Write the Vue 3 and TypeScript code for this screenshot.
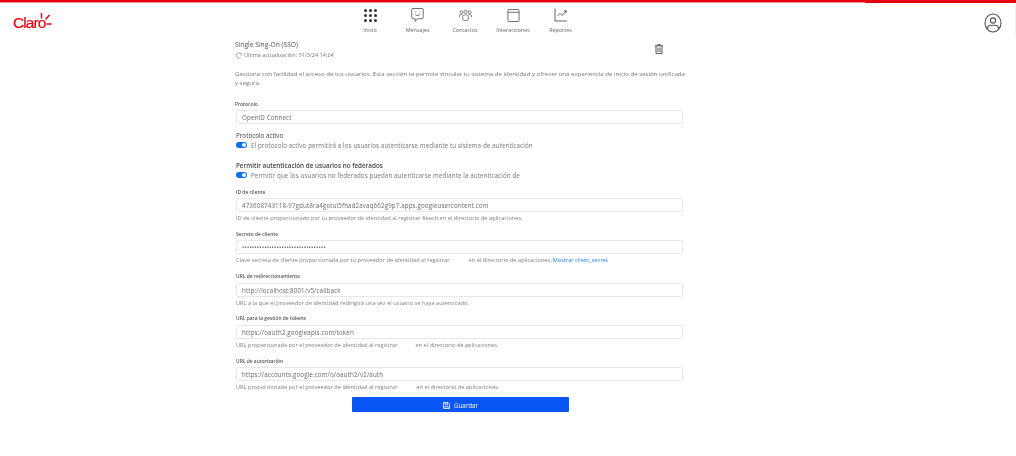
<script setup lang="ts">
interface Field {
	label: string;
	value: string;
	help: string;
	gap?: string;
	after?: string;
	link?: string;
}

const fields: Field[] = [
	{
		label: "ID de cliente",
		value: "473608743118-97gdut8ra4gotui5fhad2avaq662g9p7.apps.googleusercontent.com",
		help: "ID de cliente proporcionado por tu proveedor de identidad al registrar Reach en el directorio de aplicaciones.",
	},
	{
		label: "Secreto de cliente",
		value: "••••••••••••••••••••••••••••••••••",
		help: "Clave secreta de cliente proporcionada por tu proveedor de identidad al registrar",
		gap: "15px",
		after: "en el directorio de aplicaciones.",
		link: "Mostrar client_secret",
	},
	{
		label: "URL de redireccionamiento",
		value: "http://localhost:8001/v5/callback",
		help: "URL a la que el proveedor de identidad redirigirá una vez el usuario se haya autenticado.",
	},
	{
		label: "URL para la gestión de tokens",
		value: "https://oauth2.googleapis.com/token",
		help: "URL proporcionada por el proveedor de identidad al registrar",
		gap: "14px",
		after: "en el directorio de aplicaciones.",
	},
	{
		label: "URL de autorización",
		value: "https://accounts.google.com/o/oauth2/v2/auth",
		help: "URL proporcionada por el proveedor de identidad al registrar",
		gap: "15px",
		after: "en el directorio de aplicaciones.",
	},
];

const dots = [0, 1, 2, 3, 4, 5, 6, 7, 8];
</script>

<template>
	<div class="page">
		<div class="top_bar"><span class="top_bar_end"></span></div>

		<header>
			<div class="logo">
				<span>Claro</span>
				<svg width="14" height="16" viewBox="0 0 14 16">
					<path d="M2.500 0v5.500M6.500 6.500 10.500 2M7.500 11h5" stroke="#e30613" stroke-width="1.400" fill="none" />
				</svg>
			</div>

			<nav>
				<div class="nav_item inicio">
					<div class="nav_icon">
						<div class="dots"><i v-for="dot in dots" :key="dot"></i></div>
					</div>
					<span>Inicio</span>
				</div>
				<div class="nav_item mensajes">
					<div class="nav_icon">
						<svg width="13" height="16" viewBox="0 0 14 16" fill="none" stroke="#555" stroke-width="0.9">
							<path d="M2 1h10a1.200 1.200 0 0 1 1.200 1.200v8.600A1.200 1.200 0 0 1 12 12H7l-2.500 3v-3H2a1.200 1.200 0 0 1-1.200-1.200V2.200A1.200 1.200 0 0 1 2 1Z" />
							<path d="M4.500 7.500c1.300 1.500 3.700 1.500 5 0M5 4.500v.8M9 4.500v.8" />
						</svg>
					</div>
					<span>Mensajes</span>
				</div>
				<div class="nav_item contactos">
					<div class="nav_icon">
						<svg width="13" height="13" viewBox="0 0 14 14" fill="none" stroke="#555" stroke-width="0.8">
							<circle cx="2.600" cy="3.500" r="1.500" />
							<circle cx="7" cy="3" r="1.700" />
							<circle cx="11.400" cy="3.500" r="1.500" />
							<path d="M.5 9V7.500C.5 6.500 1.500 6 2.600 6c.8 0 1.200.2 1.600.5M13.500 9V7.500c0-1-1-1.500-2.100-1.500-.8 0-1.200.2-1.600.5" />
							<path d="M4 11.500v-3C4 7 5.500 6.200 7 6.200S10 7 10 8.500v3c-1.500 1.300-4.500 1.300-6 0Z" />
						</svg>
					</div>
					<span>Contactos</span>
				</div>
				<div class="nav_item interacciones">
					<div class="nav_icon">
						<svg width="13" height="15" viewBox="0 0 14 15" fill="none" stroke="#555" stroke-width="0.9">
							<rect x="1" y="1" width="12" height="13" rx="1" />
							<path d="M1 4h12" />
						</svg>
					</div>
					<span>Interacciones</span>
				</div>
				<div class="nav_item reportes">
					<div class="nav_icon">
						<svg width="14" height="14" viewBox="0 0 14 14" fill="none" stroke="#555" stroke-width="0.9">
							<path d="M1 .5v12.500h12" />
							<path d="M3.500 8 6 5.500 8 7.500 12 3M10 2.800h2.200V5" />
						</svg>
					</div>
					<span>Reportes</span>
				</div>
			</nav>

			<svg class="user" width="18" height="20" viewBox="0 0 18 20" fill="none" stroke="#555" stroke-width="1.100">
				<ellipse cx="9" cy="10" rx="8" ry="9" />
				<circle cx="9" cy="7.500" r="2.600" />
				<path d="M3.700 16v-1c0-1.700 1.500-2.700 3-2.700h4.600c1.500 0 3 1 3 2.700v1" />
			</svg>
		</header>

		<main>
			<div class="title_row">
				<div>
					<h1>Single Sing-On (SSO)</h1>
					<div class="updated">
						<svg width="8" height="7" viewBox="0 0 8 7" fill="none" stroke="#888" stroke-width="0.7">
							<path d="M5.500 1.200A2.700 2.700 0 1 0 5.500 5.800M5.200 1.500h1.800M5.500 3h1.800" />
						</svg>
						<span>Última actualización: 31/3/24 14:24</span>
					</div>
				</div>
				<svg class="trash" width="8" height="10" viewBox="0 0 8 10" fill="none" stroke="#444" stroke-width="0.9">
					<path d="M0 1.800h8M2.700 1.700V.6h2.600v1.100M1 2v7.400h6V2M3 3.500v4.500M5 3.500v4.500" />
				</svg>
			</div>

			<p class="description">
				Gestiona con facilidad el acceso de tus usuarios. Esta sección te permite vincular tu sistema de identidad y ofrecer una experiencia de inicio de sesión unificada y segura.
			</p>

			<label class="field_label first">Protocolo</label>
			<div class="input">OpenID Connect</div>

			<div class="switch_title active_title">Protocolo activo</div>
			<div class="switch_row">
				<span class="switch"></span>
				<span>El protocolo activo permitirá a los usuarios autenticarse mediante tu sistema de autenticación</span>
			</div>

			<div class="switch_title federated_title">Permitir autenticación de usuarios no federados</div>
			<div class="switch_row">
				<span class="switch"></span>
				<span>Permitir que los usuarios no federados puedan autenticarse mediante la autenticación de</span>
			</div>

			<section class="fields">
				<div v-for="field in fields" :key="field.label" class="field">
					<label class="field_label">{{ field.label }}</label>
					<div class="input">{{ field.value }}</div>
					<div class="help">
						<span>{{ field.help }}</span>
						<span v-if="field.gap" :style="{ width: field.gap }"></span>
						<span v-if="field.after">{{ field.after }}</span>
						<a v-if="field.link">{{ field.link }}</a>
					</div>
				</div>
			</section>

			<button type="button">
				<svg width="7" height="7" viewBox="0 0 7 7" fill="none" stroke="#fff" stroke-width="0.8">
					<path d="M.5.5h4.500l1.500 1.500v4.500h-6ZM2 .7v1.600h2.500V.7M2 6.300V4.200h3v2.100" />
				</svg>
				<span>Guardar</span>
			</button>
		</main>
	</div>
</template>

<style scoped>
.page {
	width: 1016px;
	height: 456px;
	background: #fff;
	overflow: hidden;
	font-family: "Open Sans", sans-serif;
	color: #6f6f6f;
	filter: blur(0.35px);
}

.top_bar {
	height: 2px;
	border-bottom: 1px solid #f28a8f;
	background: #e5000f;
	display: flex;
	justify-content: flex-end;
}

.top_bar_end {
	width: 151px;
	height: 3px;
	background: #e5000f;
}

header {
	height: 33px;
	display: flex;
	padding-left: 13px;
	position: relative;
	border-right: 1px solid #f2f2f2;
}

.logo {
	display: flex;
	width: 351px;
	height: 24px;
	padding-top: 11px;
	font-family: "Liberation Sans", sans-serif;
	font-size: 15.500px;
	letter-spacing: -0.9px;
	line-height: 18px;
	color: #e30613;
	-webkit-text-stroke: 0.2px #e30613;
}

.logo svg {
	margin: -1px 0 0 -7px;
}

nav {
	display: flex;
	font-size: 5.400px;
	color: #666;
}

.nav_item {
	display: flex;
	flex-direction: column;
	align-items: center;
	gap: 3px;
	padding-top: 4px;
}

.nav_icon {
	height: 16px;
	display: flex;
	align-items: center;
}

.inicio { width: 12px; }
.mensajes { width: 24px; margin-left: 29.500px; }
.contactos { width: 26px; margin-left: 22.500px; }
.interacciones { width: 33px; margin-left: 18.500px; }
.reportes { width: 24px; margin-left: 19px; }

.dots {
	display: grid;
	grid-template-columns: repeat(3, 3px);
	gap: 2px;
}

.dots i {
	width: 3px;
	height: 3px;
	border-radius: 50%;
	background: #333;
}

.user {
	position: absolute;
	right: 13px;
	top: 10px;
}

main {
	width: 449px;
	margin-left: 235px;
	margin-top: 3.500px;
}

.title_row {
	display: flex;
	justify-content: space-between;
	padding-right: 21px;
}

.title_row .trash {
	margin-top: 4.500px;
}

h1 {
	margin: 0;
	font-size: 6.700px;
	font-weight: 400;
	line-height: 9px;
	color: #555;
}

.updated {
	display: flex;
	align-items: center;
	gap: 1px;
	margin-top: 2.500px;
	font-size: 5.500px;
	line-height: 8px;
	color: #777;
}

.description {
	margin: 10px -4px 0 0;
	font-size: 6.090px;
	line-height: 9.250px;
	color: #777;
}

.field_label {
	display: block;
	font-size: 4.900px;
	line-height: 8.500px;
	font-weight: 600;
	color: #555;
}

.field_label.first {
	margin-top: 12px;
}

.input {
	height: 14px;
	width: 447px;
	box-sizing: border-box;
	margin: 2px 0 0 1px;
	padding-left: 5px;
	border: 1px solid #e8e8e8;
	border-radius: 2px;
	font-size: 6.200px;
	line-height: 13px;
	letter-spacing: 0.14px;
	color: #6a6a6a;
}

.switch_title {
	margin-left: 1px;
	font-size: 6.300px;
	line-height: 8px;
	color: #444;
}

.active_title {
	margin-top: 7.500px;
}

.federated_title {
	margin-top: 12px;
	font-weight: 600;
}

.switch_row {
	display: flex;
	align-items: center;
	gap: 4px;
	margin: 1px 0 0 1px;
	height: 9px;
	font-size: 6.240px;
	letter-spacing: 0.1px;
	color: #777;
}

.switch {
	width: 11px;
	height: 6px;
	border-radius: 3px;
	background: #0b6fe8;
	position: relative;
}

.switch::after {
	content: "";
	position: absolute;
	right: 1px;
	top: 1px;
	width: 4px;
	height: 4px;
	border-radius: 50%;
	background: #fff;
}

.fields {
	margin-top: 8px;
	display: flex;
	flex-direction: column;
}

.field {
	height: 42.250px;
	margin-left: 1px;
}

.field .input {
	margin-left: 0;
}

.help {
	display: flex;
	gap: 2px;
	margin-top: 2px;
	font-size: 5.670px;
	line-height: 8px;
	color: #808080;
}

.help a {
	margin-left: -1px;
	color: #1b7fe0;
}

button {
	display: flex;
	align-items: center;
	justify-content: center;
	gap: 4px;
	width: 217px;
	height: 15px;
	margin: -1.750px 0 0 117px;
	padding: 1px 0 0;
	border: none;
	border-radius: 1px;
	background: #0a56f5;
	color: #fff;
	font-family: inherit;
	font-size: 6.200px;
}
</style>
